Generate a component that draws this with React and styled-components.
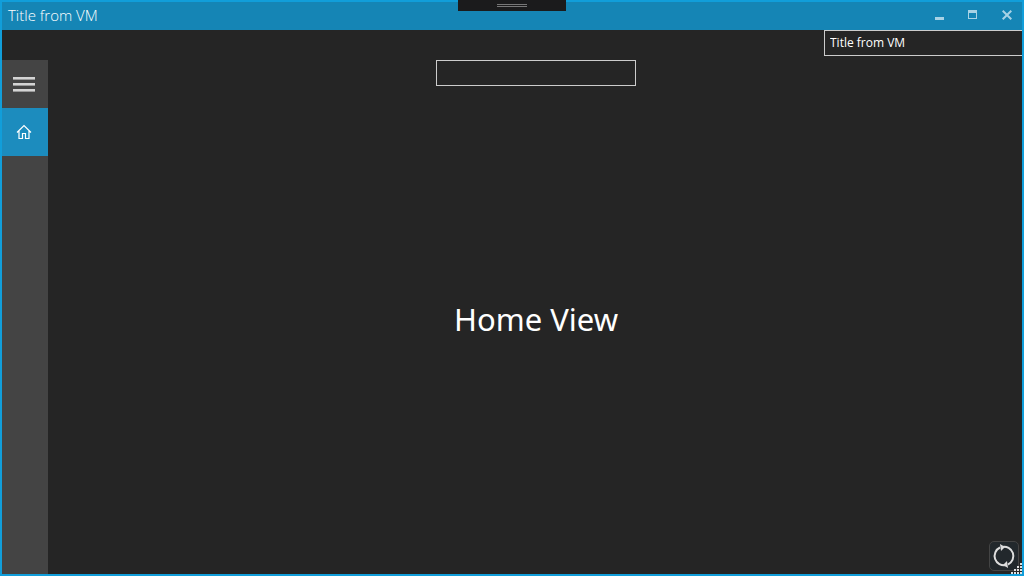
import React, { useState } from "react";
import styled, { createGlobalStyle } from "styled-components";

const font = '"Noto Sans", "Open Sans", sans-serif';
const accent = "#119eda";

const GlobalStyle = createGlobalStyle`
  * { box-sizing: border-box; }
  body { margin: 0; background: #252525; font-family: ${font}; }
`;

const Window = styled.div`
  display: flex;
  flex-direction: column;
  min-height: 100vh;
  border: 2px solid ${accent};
  background: #252525;
  color: #fff;
  position: relative;
`;

const TitleBar = styled.header`
  display: flex;
  align-items: flex-start;
  justify-content: space-between;
  height: 28px;
  padding-left: 6px;
  background: #1585b5;
`;

const Title = styled.h1`
  margin: 0;
  font: 300 15px/26px "Open Sans", sans-serif;
`;

const WindowButtons = styled.div`
  display: flex;
  gap: 4px;
`;

const WindowButton = styled.button`
  display: grid;
  place-items: center;
  width: 30px;
  height: 26px;
  padding: 0;
  border: 0;
  background: none;
  color: #a8d2e5;
`;

const DebugHandle = styled.div`
  position: absolute;
  top: -2px;
  left: calc(50% - 54px);
  display: grid;
  place-items: center;
  width: 108px;
  height: 11px;
  background: #1b1b1c;

  &::after {
    content: "";
    width: 30px;
    height: 1px;
    border: solid #777;
    border-width: 1px 0;
  }
`;

const Tools = styled.div`
  display: flex;
  justify-content: flex-end;
  height: 30px;
`;

const TextBox = styled.input`
  width: ${(p) => p.$width}px;
  height: 26px;
  padding: 0 5px 2px;
  border: 1px solid #ccc;
  border-right-width: ${(p) => (p.$flush ? 0 : 1)}px;
  border-radius: 0;
  outline: 0;
  background: #252525;
  color: #fff;
  font: 12px/22px "Open Sans", sans-serif;
`;

const Body = styled.div`
  display: flex;
  flex: 1;
`;

const Menu = styled.nav`
  width: 46px;
  background: #444;
`;

const MenuButton = styled.button`
  display: grid;
  place-items: center;
  width: 100%;
  height: 48px;
  padding: 0 2px 0 0;
  border: 0;
  background: ${(p) => (p.$active ? "#1c8cbe" : "transparent")};
  color: ${(p) => (p.$active ? "#fff" : "#ccc")};
`;

const Main = styled.main`
  display: flex;
  flex: 1;
  flex-direction: column;
  align-items: center;
  padding-left: 2px;
`;

const View = styled.section`
  display: grid;
  flex: 1;
  place-items: center;
  padding-bottom: 22px;
`;

const Heading = styled.h2`
  margin: 0;
  font: 400 31px/44px ${font};
`;

const SyncButton = styled.button`
  position: absolute;
  right: 3px;
  bottom: 3px;
  display: grid;
  place-items: center;
  width: 30px;
  height: 30px;
  padding: 0;
  border: 1px solid #444;
  border-radius: 5px;
  background: #22282c;
  color: #ddd;
`;

const Grip = styled.svg`
  position: absolute;
  right: 0;
  bottom: 0;
`;

const gripDots = [0, 1, 2, 3].flatMap((row) =>
  Array.from({ length: row + 1 }, (_, i) => [9 - i * 3, row * 3])
);

export default function App() {
  const [title, setTitle] = useState("Title from VM");
  const [text, setText] = useState("");

  return (
    <>
      <GlobalStyle />
      <Window>
        <TitleBar>
          <Title>{title}</Title>
          <WindowButtons>
            <WindowButton aria-label="Minimize">
              <svg width="10" height="10" shapeRendering="crispEdges">
                <path d="M1 7h9v3H1z" fill="currentColor" />
              </svg>
            </WindowButton>
            <WindowButton aria-label="Maximize">
              <svg width="10" height="10" shapeRendering="crispEdges">
                <path d="M0 0h9v9H0zM1 3v5h7V3z" fill="currentColor" fillRule="evenodd" />
              </svg>
            </WindowButton>
            <WindowButton aria-label="Close">
              <svg width="10" height="10" viewBox="0 0 10 10">
                <path d="M.7.7l8.600 8.600M9.300.7L.7 9.300" stroke="currentColor" strokeWidth="2" />
              </svg>
            </WindowButton>
          </WindowButtons>
        </TitleBar>
        <DebugHandle />
        <Tools>
          <TextBox $width={198} $flush aria-label="Window title" value={title} onChange={(e) => setTitle(e.target.value)} />
        </Tools>
        <Body>
          <Menu>
            <MenuButton aria-label="Menu">
              <svg width="22" height="16" shapeRendering="crispEdges">
                <path d="M0 1h22v2H0zM0 7h22v2H0zM0 13h22v2H0z" fill="#d4d4d4" />
                <path d="M0 3h22v1H0zM0 9h22v1H0zM0 15h22v1H0z" fill="#999" />
              </svg>
            </MenuButton>
            <MenuButton $active aria-label="Home">
              <svg width="16" height="16" viewBox="0 0 16 16" fill="none" stroke="currentColor">
                <path d="M1 8.500L8 1.500l7 7M3 7v7.500h3.500V9.500h3v5H13V7" strokeWidth="1.200" />
              </svg>
            </MenuButton>
          </Menu>
          <Main>
            <TextBox $width={200} aria-label="Text" value={text} onChange={(e) => setText(e.target.value)} />
            <View>
              <Heading>Home View</Heading>
            </View>
          </Main>
        </Body>
        <SyncButton aria-label="Refresh">
          <svg width="24" height="26" viewBox="0 0 24 26" fill="none" stroke="currentColor" strokeWidth="2">
            <path d="M8 4.500A9.300 9.300 0 0 0 14 22M16 21.500A9.300 9.300 0 0 0 10 4" />
            <path d="M8 1l5 3-4 4zM16 25l-5-3 4-4z" fill="currentColor" stroke="none" />
          </svg>
        </SyncButton>
        <Grip width="11" height="11" shapeRendering="crispEdges" aria-hidden="true">
          {gripDots.map(([x, y]) => (
            <rect key={`${x}-${y}`} x={x} y={y} width="2" height="2" fill="#e0e0e0" />
          ))}
        </Grip>
      </Window>
    </>
  );
}
